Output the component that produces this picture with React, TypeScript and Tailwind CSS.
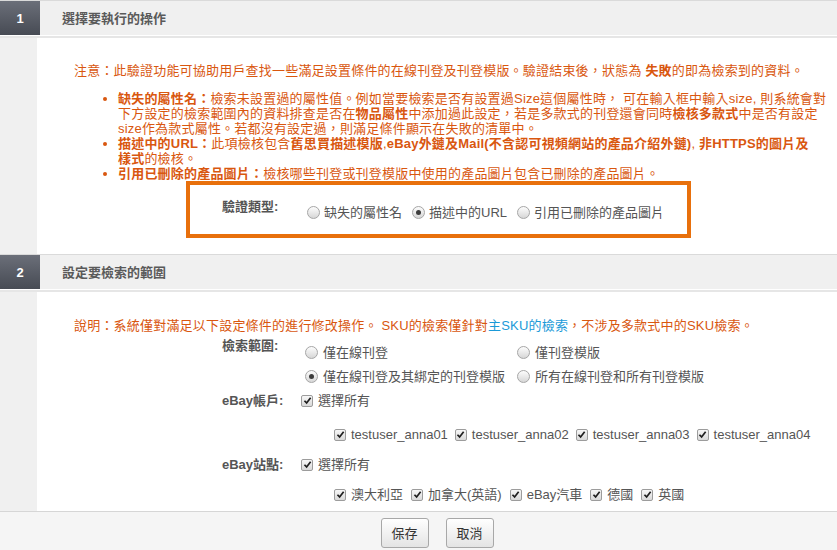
import React from 'react';

const FONT = '"Liberation Sans", "Noto Sans CJK TC", Arial, sans-serif';

function Radio({ checked = false }: { checked?: boolean }) {
  return (
    <span className="inline-flex h-[13px] w-[13px] shrink-0 items-center justify-center rounded-full border border-[#a6a6a6] bg-linear-to-b from-[#fdfdfd] to-[#d6d6d6]">
      {checked && <span className="h-[5px] w-[5px] rounded-full bg-[#3c3c3c]" />}
    </span>
  );
}

function Check() {
  return (
    <span className="inline-flex h-[12px] w-[12px] shrink-0 items-center justify-center rounded-[2px] border border-[#9c9c9c] bg-linear-to-b from-[#f7f7f7] to-[#d9d9d9]">
      <svg viewBox="0 0 10 10" className="h-[9px] w-[9px]">
        <path d="M1.6 5.3 L4 7.7 L8.5 1.9" fill="none" stroke="#1f1f1f" strokeWidth="1.9" />
      </svg>
    </span>
  );
}

function RadioItem({ label, checked }: { label: string; checked?: boolean }) {
  return (
    <label className="flex items-center">
      <span className="ml-[4px] mr-[5px] flex">
        <Radio checked={checked} />
      </span>
      <span>{label}</span>
    </label>
  );
}

function CheckItem({ label }: { label: string }) {
  return (
    <label className="flex items-center">
      <span className="mr-[5px] flex">
        <Check />
      </span>
      <span>{label}</span>
    </label>
  );
}

function SectionHeader({ n, title }: { n: number; title: string }) {
  return (
    <div className="shrink-0 border-t border-[#dadada]">
      <div className="flex h-[34px] bg-[#f0f0f0]">
        <div className="flex w-[40px] items-center justify-center bg-linear-to-b from-[#6b6f79] to-[#474b54] text-[13px] font-bold text-white">
          {n}
        </div>
        <div className="flex items-center pl-[22px] text-[13px] font-bold text-[#5a5a5a]">{title}</div>
      </div>
      <div className="h-px bg-white" />
      <div className="h-[2px] bg-[#e6e6e6]" />
    </div>
  );
}

export default function App() {
  const accounts = ['testuser_anna01', 'testuser_anna02', 'testuser_anna03', 'testuser_anna04'];
  const sites = ['澳大利亞', '加拿大(英語)', 'eBay汽車', '德國', '英國'];

  return (
    <div
      className="flex h-[550px] w-[837px] flex-col overflow-hidden bg-white text-[13px] leading-[15px]"
      style={{ fontFamily: FONT }}
    >
      {/* Step 1 */}
      <SectionHeader n={1} title="選擇要執行的操作" />
      <div className="flex shrink-0">
        <div className="w-[37px] shrink-0 bg-[#f0f0f0]" />
        <div className="flex-1 pb-[16px] pl-[37px] pr-[10px] pt-[25px] text-[#d9570f]">
          <p className="tracking-[0.2px]">
            注意：此驗證功能可協助用戶查找一些滿足設置條件的在線刊登及刊登模版。驗證結束後，狀態為 <b>失敗</b>的即為檢索到的資料。
          </p>
          <ul className="ml-[44px] mt-[13px] list-disc tracking-[0.2px] marker:text-[#d9570f]">
            <li>
              <b>缺失的屬性名：</b>檢索未設置過的屬性值。例如當要檢索是否有設置過Size這個屬性時， 可在輸入框中輸入size, 則系統會對下方設定的檢索範圍內的資料排查是否在<b>物品屬性</b>中添加過此設定，若是多款式的刊登還會同時<b>檢核多款式</b>中是否有設定size作為款式屬性。若都沒有設定過，則滿足條件顯示在失敗的清單中。
            </li>
            <li>
              <b>描述中的URL：</b>此項檢核包含<b>舊思買描述模版</b>,<b>eBay外鏈及Mail(不含認可視頻網站的產品介紹外鏈)</b>, <b>非HTTPS的圖片及<span className="whitespace-nowrap">樣式</span></b>的檢核。
            </li>
            <li>
              <b>引用已刪除的產品圖片：</b>檢核哪些刊登或刊登模版中使用的產品圖片包含已刪除的產品圖片。
            </li>
          </ul>
          <div className="ml-[112px] flex h-[57px] w-[505px] items-start border-4 border-[#e8700c] pl-[32px] pt-[14px] text-[#555]">
            <div className="w-[85px] shrink-0 font-bold text-[#545454]">驗證類型:</div>
            <div className="mt-[6px] flex items-center gap-[5px] text-[#555]">
              <label className="flex items-center">
                <span className="mr-[4px] flex">
                  <Radio />
                </span>
                缺失的屬性名
              </label>
              <label className="ml-[5px] flex items-center">
                <span className="mr-[4px] flex">
                  <Radio checked />
                </span>
                描述中的URL
              </label>
              <label className="ml-[5px] flex items-center">
                <span className="mr-[4px] flex">
                  <Radio />
                </span>
                引用已刪除的產品圖片
              </label>
            </div>
          </div>
        </div>
      </div>

      {/* Step 2 */}
      <SectionHeader n={2} title="設定要檢索的範圍" />
      <div className="flex min-h-0 flex-1">
        <div className="w-[37px] shrink-0 bg-[#f0f0f0]" />
        <div className="flex-1 pl-[37px] pr-[10px] pt-[26px] text-[#555]">
          <p className="tracking-[0.2px] text-[#d9570f]">
            說明：系統僅對滿足以下設定條件的進行修改操作。 SKU的檢索僅針對<span className="text-[#1b9ad8]">主SKU的檢索</span>，不涉及多款式中的SKU檢索。
          </p>

          <div className="ml-[148px] mt-[5px] flex">
            <div className="w-[79px] shrink-0 font-bold">檢索範圍:</div>
            <div className="mt-[2px] grid grid-cols-[212px_auto]">
              <div className="flex h-[24px] items-center">
                <RadioItem label="僅在線刊登" />
              </div>
              <div className="flex h-[24px] items-center">
                <RadioItem label="僅刊登模版" />
              </div>
              <div className="flex h-[24px] items-center">
                <RadioItem label="僅在線刊登及其綁定的刊登模版" checked />
              </div>
              <div className="flex h-[24px] items-center">
                <RadioItem label="所有在線刊登和所有刊登模版" />
              </div>
            </div>
          </div>

          <div className="ml-[148px] mt-[5px] flex">
            <div className="w-[79px] shrink-0 font-bold">eBay帳戶:</div>
            <div>
              <CheckItem label="選擇所有" />
              <div className="mt-[19px] flex gap-[7px] pl-[33px]">
                {accounts.map((a) => (
                  <CheckItem key={a} label={a} />
                ))}
              </div>
            </div>
          </div>

          <div className="ml-[148px] mt-[15px] flex">
            <div className="w-[79px] shrink-0 font-bold">eBay站點:</div>
            <div>
              <CheckItem label="選擇所有" />
              <div className="mt-[15px] flex gap-[8px] pl-[33px]">
                {sites.map((s) => (
                  <CheckItem key={s} label={s} />
                ))}
              </div>
            </div>
          </div>
        </div>
      </div>

      {/* Footer */}
      <div className="flex h-[39px] shrink-0 justify-center gap-[17px] border-t border-[#d6d6d6] bg-[#f5f5f5] pl-[37px] pt-[6px]">
        <button className="h-[30px] w-[48px] rounded-[3px] border border-[#a8a8a8] bg-linear-to-b from-white to-[#e4e4e4] text-[13px] text-[#333]">
          保存
        </button>
        <button className="h-[30px] w-[48px] rounded-[3px] border border-[#a8a8a8] bg-linear-to-b from-white to-[#e4e4e4] text-[13px] text-[#333]">
          取消
        </button>
      </div>
    </div>
  );
}
